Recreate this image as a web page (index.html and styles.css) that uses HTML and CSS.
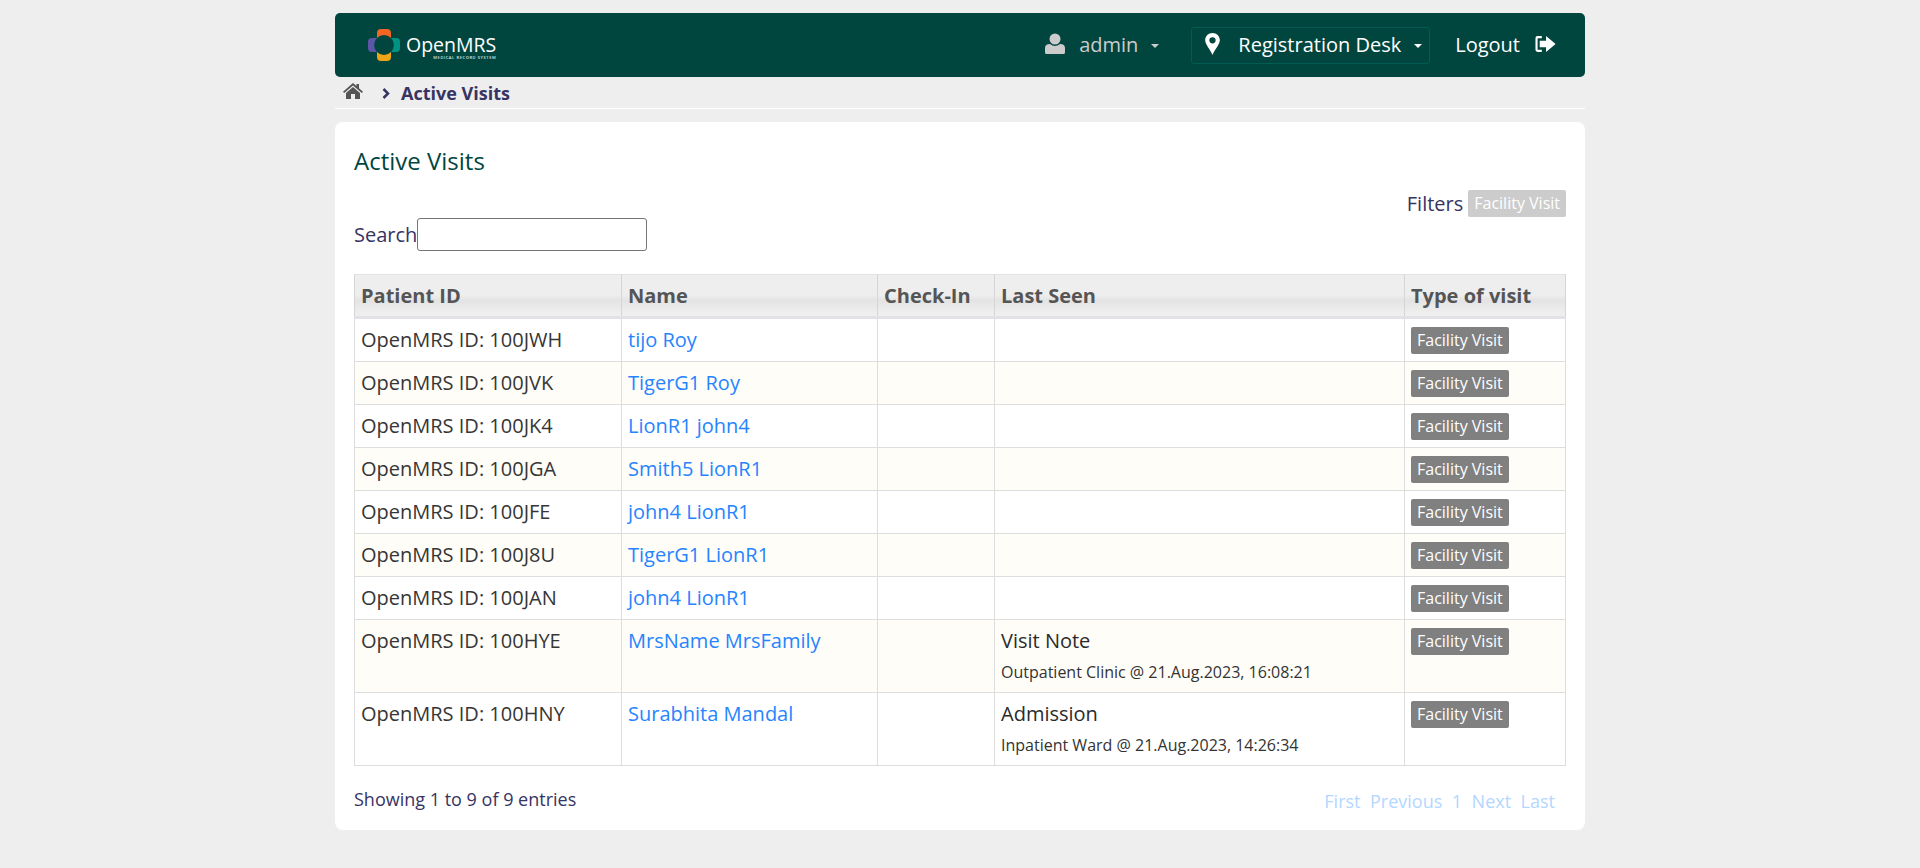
FILE: index.html
```html
<!DOCTYPE html>
<html lang="en">
<head>
    <meta charset="UTF-8">
    <title>OpenMRS - Active Visits</title>
    <link rel="stylesheet" href="styles.css">
</head>
<body>
    <div class="container">
        <header class="topbar">
            <a class="logo">
                <svg class="logo-mark" width="34" height="34" viewBox="0 0 34 34">
                    <path d="M10 10 V5 Q10 1 14 1 H20 Q24 1 24 5 V10 A9.900 9.900 0 0 0 10 10 Z" fill="#f26522"/>
                    <path d="M24 10 H29 Q33 10 33 14 V20 Q33 24 29 24 H24 A9.900 9.900 0 0 0 24 10 Z" fill="#009384"/>
                    <path d="M10 24 A9.900 9.900 0 0 0 24 24 V29 Q24 33 20 33 H14 Q10 33 10 29 Z" fill="#eea616"/>
                    <path d="M10 10 H5 Q1 10 1 14 V20 Q1 24 5 24 H10 A9.900 9.900 0 0 1 10 10 Z" fill="#5b57a6"/>
                </svg>
                <span class="logo-text">
                    <span class="logo-name">OpenMRS</span>
                    <span class="logo-sub">MEDICAL RECORD SYSTEM</span>
                </span>
            </a>
            <nav class="topnav">
                <div class="nav-item nav-user">
                    <svg width="20" height="22" viewBox="0 0 20 22"><circle cx="10" cy="6" r="5.500" fill="#ccc"/><path d="M1 21 Q0 21 0 19 V15 Q0 11 5 11 Q10 15 15 11 Q20 11 20 15 V19 Q20 21 19 21 Z" fill="#ccc"/></svg>
                    <span class="nav-label">admin</span>
                    <span class="caret"></span>
                </div>
                <div class="nav-item nav-location">
                    <svg width="15" height="22" viewBox="0 0 14 21"><path fill-rule="evenodd" d="M7 0 C3 0 0 3 0 7 C0 11 5 16 7 21 C9 16 14 11 14 7 C14 3 11 0 7 0 Z M7 4 A3 3 0 1 1 7 10 A3 3 0 1 1 7 4 Z" fill="#fff"/></svg>
                    <span class="nav-label">Registration Desk</span>
                    <span class="caret"></span>
                </div>
                <div class="nav-item nav-logout">
                    <span class="nav-label">Logout</span>
                    <svg width="22" height="18" viewBox="0 0 20 17"><path d="M7 1 H3 Q1 1 1 3 V14 Q1 16 3 16 H7 V14 H3.500 Q3 14 3 13.500 V3.500 Q3 3 3.500 3 H7 Z" fill="#fff"/><path d="M5 5.500 H11 V1 L20 8.500 L11 16 V11.500 H5 Z" fill="#fff"/></svg>
                </div>
            </nav>
        </header>

        <div class="breadcrumbs">
            <svg class="home-icon" width="20" height="16" viewBox="0 0 20 16"><path d="M10 0 L13.500 3 V1 H16 V5.200 L20 8.700 L18.800 10 L10 2.500 L1.200 10 L0 8.700 Z" fill="#555"/><path d="M10 4 L17 10 V16 H12 V11 H8 V16 H3 V10 Z" fill="#555"/></svg>
            <svg class="crumb-sep" width="8" height="11" viewBox="0 0 8 11"><path d="M1.500 1 L6 5.500 L1.500 10" fill="none" stroke="#363463" stroke-width="2.500"/></svg>
            <span class="crumb-current">Active Visits</span>
        </div>

        <main class="card">
            <h2 class="card-title">Active Visits</h2>
            <div class="filters">
                <span class="filters-label">Filters</span>
                <span class="badge badge-off">Facility Visit</span>
            </div>
            <div class="search">
                <label for="search-box">Search</label><input id="search-box" type="text">
            </div>

            <table class="visits">
                <thead>
                    <tr>
                        <th class="col-id">Patient ID</th>
                        <th class="col-name">Name</th>
                        <th class="col-checkin">Check-In</th>
                        <th class="col-seen">Last Seen</th>
                        <th>Type of visit</th>
                    </tr>
                </thead>
                <tbody>
                    <tr>
                        <td>OpenMRS ID: 100JWH</td>
                        <td><a href="#">tijo Roy</a></td>
                        <td></td>
                        <td></td>
                        <td><span class="badge">Facility Visit</span></td>
                    </tr>
                    <tr>
                        <td>OpenMRS ID: 100JVK</td>
                        <td><a href="#">TigerG1 Roy</a></td>
                        <td></td>
                        <td></td>
                        <td><span class="badge">Facility Visit</span></td>
                    </tr>
                    <tr>
                        <td>OpenMRS ID: 100JK4</td>
                        <td><a href="#">LionR1 john4</a></td>
                        <td></td>
                        <td></td>
                        <td><span class="badge">Facility Visit</span></td>
                    </tr>
                    <tr>
                        <td>OpenMRS ID: 100JGA</td>
                        <td><a href="#">Smith5 LionR1</a></td>
                        <td></td>
                        <td></td>
                        <td><span class="badge">Facility Visit</span></td>
                    </tr>
                    <tr>
                        <td>OpenMRS ID: 100JFE</td>
                        <td><a href="#">john4 LionR1</a></td>
                        <td></td>
                        <td></td>
                        <td><span class="badge">Facility Visit</span></td>
                    </tr>
                    <tr>
                        <td>OpenMRS ID: 100J8U</td>
                        <td><a href="#">TigerG1 LionR1</a></td>
                        <td></td>
                        <td></td>
                        <td><span class="badge">Facility Visit</span></td>
                    </tr>
                    <tr>
                        <td>OpenMRS ID: 100JAN</td>
                        <td><a href="#">john4 LionR1</a></td>
                        <td></td>
                        <td></td>
                        <td><span class="badge">Facility Visit</span></td>
                    </tr>
                    <tr>
                        <td>OpenMRS ID: 100HYE</td>
                        <td><a href="#">MrsName MrsFamily</a></td>
                        <td></td>
                        <td>
                            <div class="seen-type">Visit Note</div>
                            <div class="seen-detail">Outpatient Clinic @ 21.Aug.2023, 16:08:21</div>
                        </td>
                        <td><span class="badge">Facility Visit</span></td>
                    </tr>
                    <tr>
                        <td>OpenMRS ID: 100HNY</td>
                        <td><a href="#">Surabhita Mandal</a></td>
                        <td></td>
                        <td>
                            <div class="seen-type">Admission</div>
                            <div class="seen-detail">Inpatient Ward @ 21.Aug.2023, 14:26:34</div>
                        </td>
                        <td><span class="badge">Facility Visit</span></td>
                    </tr>
                </tbody>
            </table>

            <div class="table-footer">
                <div class="entries">Showing 1 to 9 of 9 entries</div>
                <div class="pager">
                    <span>First</span>
                    <span>Previous</span>
                    <span>1</span>
                    <span>Next</span>
                    <span>Last</span>
                </div>
            </div>
        </main>
    </div>
</body>
</html>
```

FILE: styles.css
```css
body {
    margin: 0;
    padding: 13px 0 37px;
    background-color: #eeeeee;
    color: #363463;
    font-family: "Open Sans", "Noto Sans", sans-serif;
    font-size: 18px;
    line-height: 27px;
}

.container {
    width: 1250px;
    margin: 0 auto;
}

.topbar {
    display: flex;
    justify-content: space-between;
    align-items: center;
    height: 64px;
    padding: 0 29px 0 32px;
    background-color: #00463f;
    border-radius: 5px;
}

.logo {
    display: flex;
    align-items: center;
    gap: 5px;
    color: #fff;
}

.logo-text {
    display: flex;
    flex-direction: column;
    align-items: flex-end;
    margin-top: 6px;
}

.logo-name {
    font-size: 19.500px;
    line-height: 18px;
}

.logo-sub {
    margin-top: 2px;
    font-size: 4px;
    line-height: 4px;
    font-weight: 600;
    letter-spacing: 0.600px;
    color: #d8e6e3;
}

.topnav {
    display: flex;
    align-items: center;
    font-size: 20px;
}

.nav-item {
    display: flex;
    align-items: center;
    color: #fff;
}

.nav-user {
    color: #ccc;
    gap: 14px;
    margin: 0 32px 2px 0;
}

.nav-user .caret {
    margin-left: -1px;
}

.nav-location {
    height: 37px;
    padding: 0 7px 2px 13px;
    gap: 18px;
    box-sizing: border-box;
    border: 1px solid #015c53;
    border-radius: 3px;
    margin-right: 25px;
}

.nav-location .caret {
    margin-left: -5px;
}

.nav-logout {
    gap: 14px;
    margin-bottom: 2px;
}

.caret {
    width: 0;
    height: 0;
    margin-top: 3px;
    border-top: 4px solid currentColor;
    border-left: 4px solid transparent;
    border-right: 4px solid transparent;
}

.breadcrumbs {
    display: flex;
    align-items: center;
    height: 30px;
    padding: 1px 0 0 8px;
    border-bottom: 1px solid #fff;
}

.home-icon {
    margin-top: -5px;
}

.crumb-sep {
    margin-left: 19px;
}

.crumb-current {
    margin-left: 11px;
    font-weight: 700;
}

.card {
    margin-top: 13px;
    padding: 21px 19px 15px;
    background-color: #fff;
    border-radius: 8px;
}

.card-title {
    margin: 0;
    color: #00463f;
    font-size: 24px;
    font-weight: 400;
    line-height: 36px;
}

.filters {
    display: flex;
    justify-content: flex-end;
    align-items: center;
    gap: 5px;
    margin-top: 11px;
    height: 27px;
}

.filters-label {
    font-size: 20px;
}

.badge {
    display: inline-block;
    padding: 0 6px;
    background-color: #808080;
    color: #fff;
    font-size: 16px;
    line-height: 27px;
    border-radius: 2px;
}

.badge-off {
    background-color: #ccc;
}

.search {
    display: flex;
    align-items: center;
    height: 33px;
    margin-top: 1px;
    font-size: 20px;
}

.search input {
    width: 230px;
    height: 33px;
    box-sizing: border-box;
    padding: 1px 2px;
    background: #fff;
    border: 1px solid #767676;
    border-radius: 3px;
}

.visits {
    width: 1212px;
    margin-top: 23px;
    border-collapse: collapse;
    table-layout: fixed;
}

.visits th {
    height: 43px;
    padding: 0 6px;
    box-sizing: border-box;
    text-align: left;
    color: #555;
    font-size: 20px;
    font-weight: 700;
    background: linear-gradient(#eeeeee 0 48%, #e3e3e3 60%, #eeeeee 90%);
    border: 1px solid #d5d5d5;
    border-bottom: 3px solid #e0e2e5;
    border-top-color: #e0e2e5;
}

.col-id { width: 267px; }
.col-name { width: 256px; }
.col-checkin { width: 117px; }
.col-seen { width: 410px; }

.visits td {
    padding: 6px;
    height: 43px;
    box-sizing: border-box;
    vertical-align: top;
    color: #363636;
    font-size: 20px;
    line-height: 30px;
    border: 1px solid #dddddd;
}

.visits tbody tr:nth-child(even) td {
    background-color: #fffdf8;
}

.visits td a {
    color: #2684ff;
    text-decoration: none;
}

.visits td .badge {
    display: block;
    width: fit-content;
    margin-top: 2px;
}

.seen-type {
    color: #2b2b2b;
}

.seen-detail {
    margin-top: 3px;
    font-size: 16px;
    line-height: 27px;
    color: #333;
}

.table-footer {
    display: flex;
    justify-content: space-between;
    align-items: flex-start;
    margin-top: 20px;
}

.pager {
    display: flex;
    gap: 9.500px;
    margin-top: 2px;
    padding-right: 11px;
    color: #b3d7ff;
}
```
